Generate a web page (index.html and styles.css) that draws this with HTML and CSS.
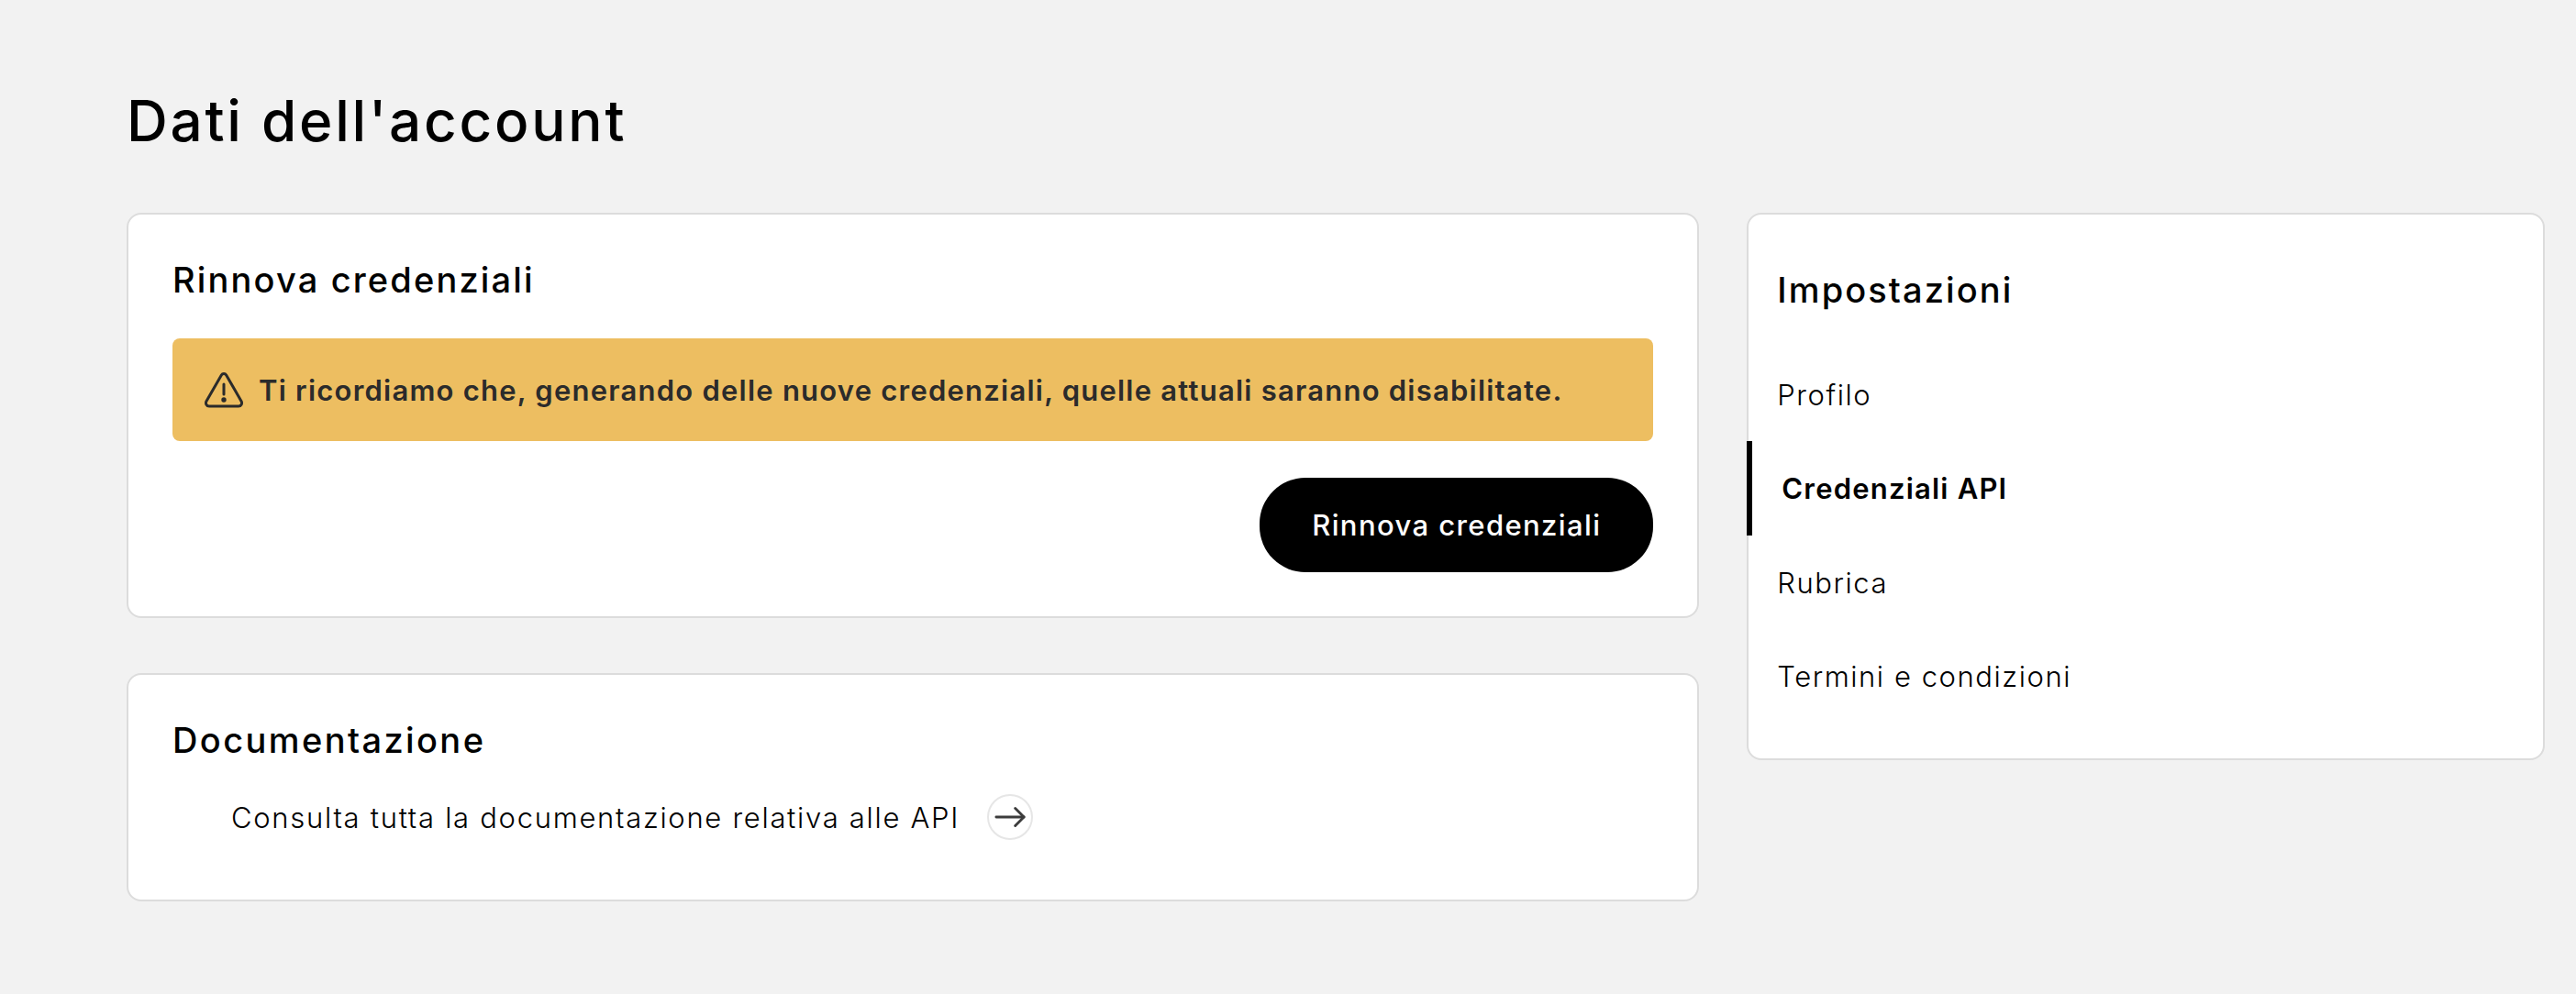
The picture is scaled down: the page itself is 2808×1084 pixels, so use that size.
FILE: index.html
```html
<!DOCTYPE html>
<html lang="it">

<head>
  <meta charset="UTF-8">
  <meta name="viewport" content="width=device-width, initial-scale=1.0">
  <title>Dati dell'account</title>
  <link rel="stylesheet" href="styles.css">
</head>

<body>
  <div class="page">
    <h1 class="page-title">Dati dell'account</h1>

    <div class="layout">
      <!-- colonna principale -->
      <main class="main-col">
        <section class="card card-renew">
          <h2 class="card-title">Rinnova credenziali</h2>
          <div class="alert">
            <svg class="alert-icon" viewBox="0 0 44 40" fill="none" stroke="#2b2b2b" stroke-width="3" stroke-linejoin="round" stroke-linecap="round">
              <path d="M19.4 4 3 32.5C1.6 35 3.2 38 6 38h32c2.800 0 4.400-3 3-5.500L24.600 4c-1.200-2.100-4-2.100-5.200 0Z" />
              <path d="M22 14v11" />
              <circle cx="22" cy="31" r="1.200" fill="#2b2b2b" />
            </svg>
            <span>Ti ricordiamo che, generando delle nuove credenziali, quelle attuali saranno disabilitate.</span>
          </div>
          <div class="actions">
            <button class="btn-primary">Rinnova credenziali</button>
          </div>
        </section>

        <section class="card card-docs">
          <h2 class="card-title doc-title">Documentazione</h2>
          <a class="doc-link">
            <span>Consulta tutta la documentazione relativa alle API</span>
            <span class="arrow-circle">
              <svg viewBox="0 0 36 24" fill="none" stroke="#3c3c3c" stroke-width="3" stroke-linecap="round" stroke-linejoin="round">
                <path d="M2 12h32" />
                <path d="M24 2l10 10-10 10" />
              </svg>
            </span>
          </a>
        </section>
      </main>

      <!-- menu laterale -->
      <aside class="card side-menu">
        <h2 class="side-title">Impostazioni</h2>
        <ul class="side-list">
          <li class="side-item">Profilo</li>
          <li class="side-item active">Credenziali API</li>
          <li class="side-item">Rubrica</li>
          <li class="side-item">Termini e condizioni</li>
        </ul>
      </aside>
    </div>
  </div>
</body>

</html>
```
FILE: styles.css
```css
* {
  margin: 0;
  padding: 0;
  box-sizing: border-box;
}

body {
  font-family: Inter, "Liberation Sans", sans-serif;
  background: #f2f2f2;
  color: #000;
  overflow: hidden;
}

.page {
  padding: 94px 34px 0 138px;
}

.page-title {
  font-size: 62px;
  line-height: 76px;
  font-weight: 500;
  letter-spacing: 2.75px;
  margin-bottom: 62px;
}

.layout {
  display: flex;
  align-items: flex-start;
  gap: 52px;
}

.main-col {
  width: 1715px;
  display: flex;
  flex-direction: column;
  gap: 60px;
}

.card {
  background: #fff;
  border: 2px solid #dcdcdc;
  border-radius: 16px;
}

.card-renew {
  height: 442px;
  padding: 48px 48px 0;
}

.card-docs {
  height: 249px;
  padding: 48px 48px 0;
}

.card-title {
  font-size: 38px;
  line-height: 46px;
  font-weight: 500;
  letter-spacing: 2.15px;
}

.doc-title {
  letter-spacing: 2.4px;
}

/* avviso giallo */
.alert {
  height: 112px;
  margin-top: 41px;
  padding-left: 34px;
  display: flex;
  align-items: center;
  gap: 16px;
  background: #edbe61;
  border-radius: 8px;
  color: #2b2b2b;
  font-size: 31px;
  font-weight: 600;
  letter-spacing: 1.23px;
}

.alert-icon {
  width: 44px;
  height: 40px;
  flex-shrink: 0;
}

.actions {
  display: flex;
  justify-content: flex-end;
  margin-top: 40px;
}

.btn-primary {
  width: 429px;
  height: 103px;
  border: none;
  border-radius: 50px;
  background: #000;
  color: #fff;
  font-family: inherit;
  font-size: 31px;
  font-weight: 500;
  letter-spacing: 1.4px;
}

.doc-link {
  display: flex;
  align-items: center;
  gap: 30px;
  margin-top: 36px;
  padding-left: 64px;
  font-size: 31px;
  font-weight: 300;
  letter-spacing: 1.7px;
}

.arrow-circle {
  width: 50px;
  height: 50px;
  display: flex;
  align-items: center;
  justify-content: center;
  border: 2px solid #e6e6e6;
  border-radius: 50%;
}

.arrow-circle svg {
  width: 34px;
  height: 24px;
}

.side-menu {
  width: 870px;
  height: 597px;
  padding-top: 57px;
}

.side-title {
  padding-left: 31px;
  font-size: 38px;
  line-height: 50px;
  font-weight: 500;
  letter-spacing: 2.1px;
}

.side-list {
  list-style: none;
  margin-top: 38px;
}

.side-item {
  height: 102px;
  padding-left: 31px;
  display: flex;
  align-items: center;
  font-size: 31px;
  font-weight: 300;
  letter-spacing: 1.55px;
}

.side-item.active {
  position: relative;
  height: 103px;
  padding-left: 36px;
  font-weight: 600;
  letter-spacing: 1.2px;
}

.side-item.active::before {
  content: "";
  position: absolute;
  left: -2px;
  top: 0;
  width: 6px;
  height: 100%;
  background: #000;
}
```
